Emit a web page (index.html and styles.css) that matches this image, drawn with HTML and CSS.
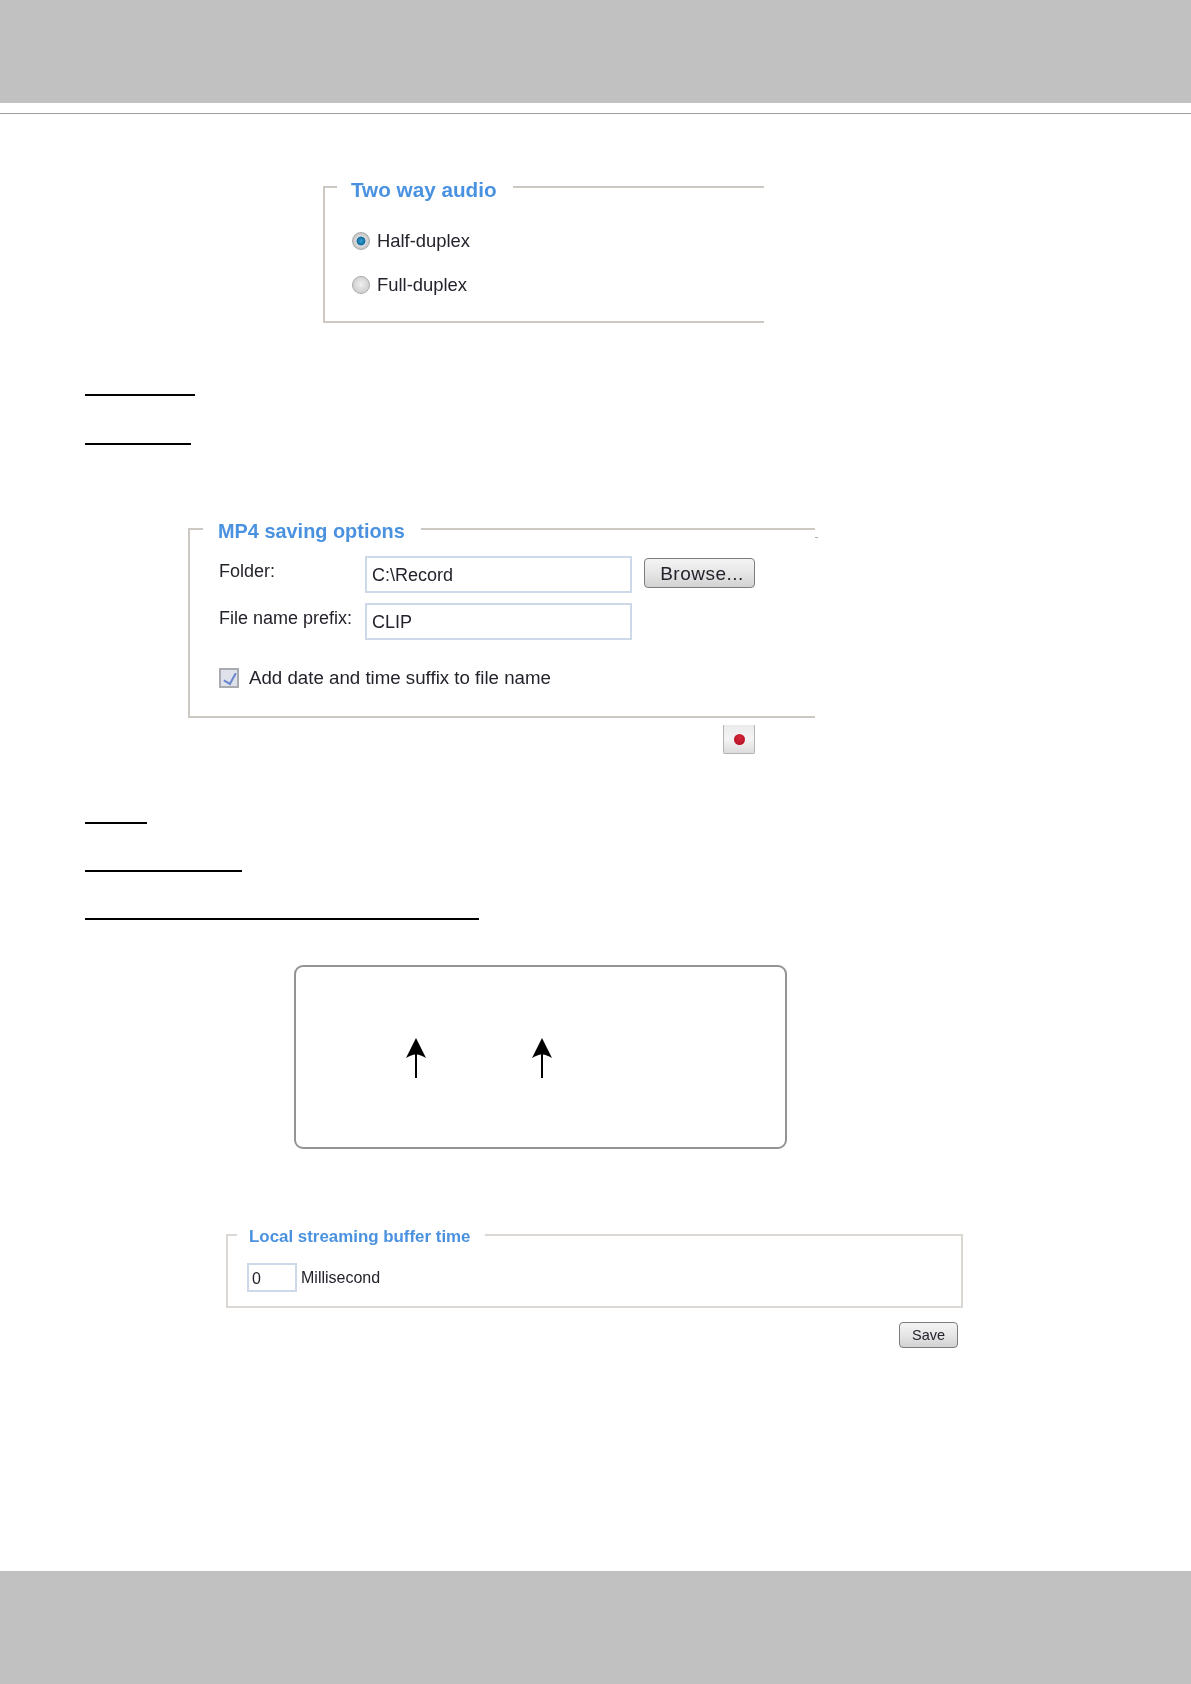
FILE: index.html
```html
<!DOCTYPE html>
<html lang="en">
<head>
  <meta charset="UTF-8" />
  <meta name="viewport" content="width=device-width, initial-scale=1.0" />
  <title>Client settings</title>
  <link rel="stylesheet" href="styles.css">
</head>
<body>
  <header class="band band-top"></header>
  <div class="rule"></div>

  <main class="page">
    <fieldset class="panel panel-audio">
      <legend>Two way audio</legend>
      <label class="choice"><input type="radio" name="audio" checked> Half-duplex</label>
      <label class="choice"><input type="radio" name="audio"> Full-duplex</label>
    </fieldset>

    <div class="terms terms-first">
      <span class="term term-195"></span>
      <span class="term term-191"></span>
    </div>

    <fieldset class="panel panel-mp4">
      <legend>MP4 saving options</legend>
      <div class="field">
        <label for="folder">Folder:</label>
        <input type="text" id="folder" value="C:\Record">
        <button type="button" class="btn btn-browse">Browse...</button>
      </div>
      <div class="field">
        <label for="prefix">File name prefix:</label>
        <input type="text" id="prefix" value="CLIP">
      </div>
      <label class="suffix"><input type="checkbox" checked> Add date and time suffix to file name</label>
    </fieldset>
    <div class="record-row">
      <button type="button" class="record" aria-label="Record"><span class="record-dot"></span></button>
    </div>

    <div class="terms terms-second">
      <span class="term term-147"></span>
      <span class="term term-242"></span>
      <span class="term term-479"></span>
    </div>

    <div class="callout">
      <svg class="arrow" viewBox="0 0 20 40" aria-hidden="true"><path d="M10 0L20 20C16 18 13 16.5 11 16.5V40H9V16.5C7 16.5 4 18 0 20Z"/></svg>
      <svg class="arrow" viewBox="0 0 20 40" aria-hidden="true"><path d="M10 0L20 20C16 18 13 16.5 11 16.5V40H9V16.5C7 16.5 4 18 0 20Z"/></svg>
    </div>

    <fieldset class="panel panel-buffer">
      <legend>Local streaming buffer time</legend>
      <div class="buffer-row">
        <input type="text" id="buffer" value="0">
        <label for="buffer">Millisecond</label>
      </div>
    </fieldset>
    <div class="save-row">
      <button type="button" class="btn btn-save">Save</button>
    </div>
  </main>

  <footer class="band band-bottom"></footer>
</body>
</html>
```

FILE: styles.css
```css
:root {
  --band: #c0c1c0;
  --line: #cdc9c2;
  --blue: #4a92e0;
  --text: #26222c;
  --input-border: #cdd8e8;
  --soft: blur(0.35px); /* the captured dialogs are slightly scaled up */
}

* {
  box-sizing: border-box;
}

body {
  margin: 0;
  height: 1684px;
  display: flex;
  flex-direction: column;
  background: #fff;
  color: var(--text);
  font-family: "Liberation Sans", Arial, sans-serif;
}

.band {
  background: var(--band);
}

.band-top {
  height: 103px;
}

.band-bottom {
  height: 113px;
}

.rule {
  height: 1px;
  margin-top: 10px;
  background: #a0a0a0;
}

.page {
  flex: 1;
  display: flex;
  flex-direction: column;
  align-items: flex-start;
}

.panel {
  margin: 0;
  padding: 0;
  min-width: 0;
  border: 2px solid var(--line);
  filter: var(--soft);
}

.panel legend {
  color: var(--blue);
  font-weight: 700;
  line-height: 24px;
}

/* first two panels are cut off on the right */
.panel-audio {
  width: 441px;
  height: 151px;
  margin: 58px 0 0 323px;
  border-right: none;
  padding-top: 17px;
}

.panel-audio legend {
  font-size: 20.7px;
  margin-left: 12px;
  padding: 6px 16px 0 14px;
}

.choice {
  display: flex;
  align-items: center;
  gap: 7px;
  height: 44px;
  margin-left: 27px;
  font-size: 18.4px;
}

.choice input {
  appearance: none;
  width: 18px;
  height: 18px;
  margin: 0;
  border: 1px solid #a8a8a8;
  border-radius: 50%;
  background: radial-gradient(circle closest-side at 50% 45%, #efefef, #d4d4d4);
}

.choice input:checked {
  background: radial-gradient(circle closest-side, #3ba0d8 0, #0d6a9e 50%, #dcdcdc 60%, #c4c4c4 100%);
}

.terms {
  display: flex;
  flex-direction: column;
  align-items: flex-start;
  margin-left: 85px;
}

.term {
  display: block;
  height: 2px;
  background: #000;
}

.terms-first {
  margin-top: 71px;
  gap: 47px;
}

.terms-second {
  margin-top: 68px;
  gap: 46px;
}

.term-195 { width: 110px; }
.term-191 { width: 106px; }
.term-147 { width: 62px; }
.term-242 { width: 157px; }
.term-479 { width: 394px; }

.panel-mp4 {
  position: relative;
  width: 627px;
  height: 203px;
  margin: 70px 0 0 188px;
  border-right: none;
  padding-top: 13px;
}

/* stray mark just past the crop edge */
.panel-mp4::after {
  content: "";
  position: absolute;
  right: -3px;
  top: -6px;
  width: 3px;
  height: 1px;
  background: #a8a8a8;
}

.panel-mp4 legend {
  font-size: 19.9px;
  margin-left: 13px;
  padding: 4px 16px 0 15px;
}

.field {
  display: flex;
  align-items: flex-start;
  height: 47px;
  margin-left: 29px;
  font-size: 18px;
}

.field label {
  width: 146px;
  padding-top: 5px;
}

.field input {
  width: 267px;
  height: 37px;
  padding: 1px 5px 0;
  border: 2px solid var(--input-border);
  background: #fff;
  color: var(--text);
  font: inherit;
}

.btn {
  border: 1px solid #7c7c7c;
  border-radius: 4px;
  background: linear-gradient(#f4f4f4, #e6e6e6 50%, #d2d2d2);
  color: var(--text);
  font-family: inherit;
  padding: 0;
}

.btn-browse {
  width: 111px;
  height: 30px;
  margin: 2px 0 0 12px;
  padding: 1px 0 0 5px;
  font-size: 19px;
  letter-spacing: 0.5px;
}

.suffix {
  display: flex;
  align-items: center;
  gap: 10px;
  margin: 17px 0 0 29px;
  font-size: 18.7px;
}

.suffix input {
  appearance: none;
  position: relative;
  width: 20px;
  height: 20px;
  margin: 0;
  border: 2px solid #a9abb0;
  background: #dfe2ea;
}

/* check mark sits over the box */
.suffix input:checked::after {
  content: "";
  position: absolute;
  left: 5px;
  top: 1px;
  width: 6px;
  height: 11px;
  border: solid #6a86cc;
  border-width: 0 2px 2px 0;
  transform: rotate(30deg);
}

.record-row {
  width: 755px;
  display: flex;
  justify-content: flex-end;
  margin-top: 7px;
}

.record {
  display: flex;
  align-items: center;
  justify-content: center;
  width: 32px;
  height: 29px;
  padding: 0;
  border: 1px solid #b4b4b4;
  border-top: none;
  border-radius: 0 0 2px 2px;
  background: linear-gradient(#ebebeb, #f4f4f4 50%, #dcdcdc);
  filter: var(--soft);
}

.record-dot {
  width: 11px;
  height: 11px;
  border-radius: 50%;
  background: radial-gradient(circle at 50% 35%, #d8283a, #a80d20);
}

.callout {
  display: flex;
  gap: 106px;
  width: 493px;
  height: 184px;
  margin: 45px 0 0 294px;
  padding: 71px 0 0 110px;
  border: 2px solid #949494;
  border-radius: 9px;
}

.arrow {
  width: 20px;
  height: 40px;
  fill: #000;
}

.panel-buffer {
  width: 737px;
  height: 85px;
  margin: 74px 0 0 226px;
  padding-top: 16px;
  border-color: #dbd8d3;
}

.panel-buffer legend {
  font-size: 16.9px;
  line-height: 20px;
  margin-left: 9px;
  padding: 4px 14px 0 12px;
}

.buffer-row {
  display: flex;
  align-items: center;
  gap: 4px;
  margin-left: 19px;
  font-size: 16px;
}

.buffer-row input {
  width: 50px;
  height: 29px;
  padding: 2px 3px 0;
  border: 2px solid var(--input-border);
  color: var(--text);
  font: inherit;
}

.save-row {
  width: 958px;
  display: flex;
  justify-content: flex-end;
  margin-top: 14px;
  filter: var(--soft);
}

.btn-save {
  width: 59px;
  height: 26px;
  font-size: 14.5px;
}
```
